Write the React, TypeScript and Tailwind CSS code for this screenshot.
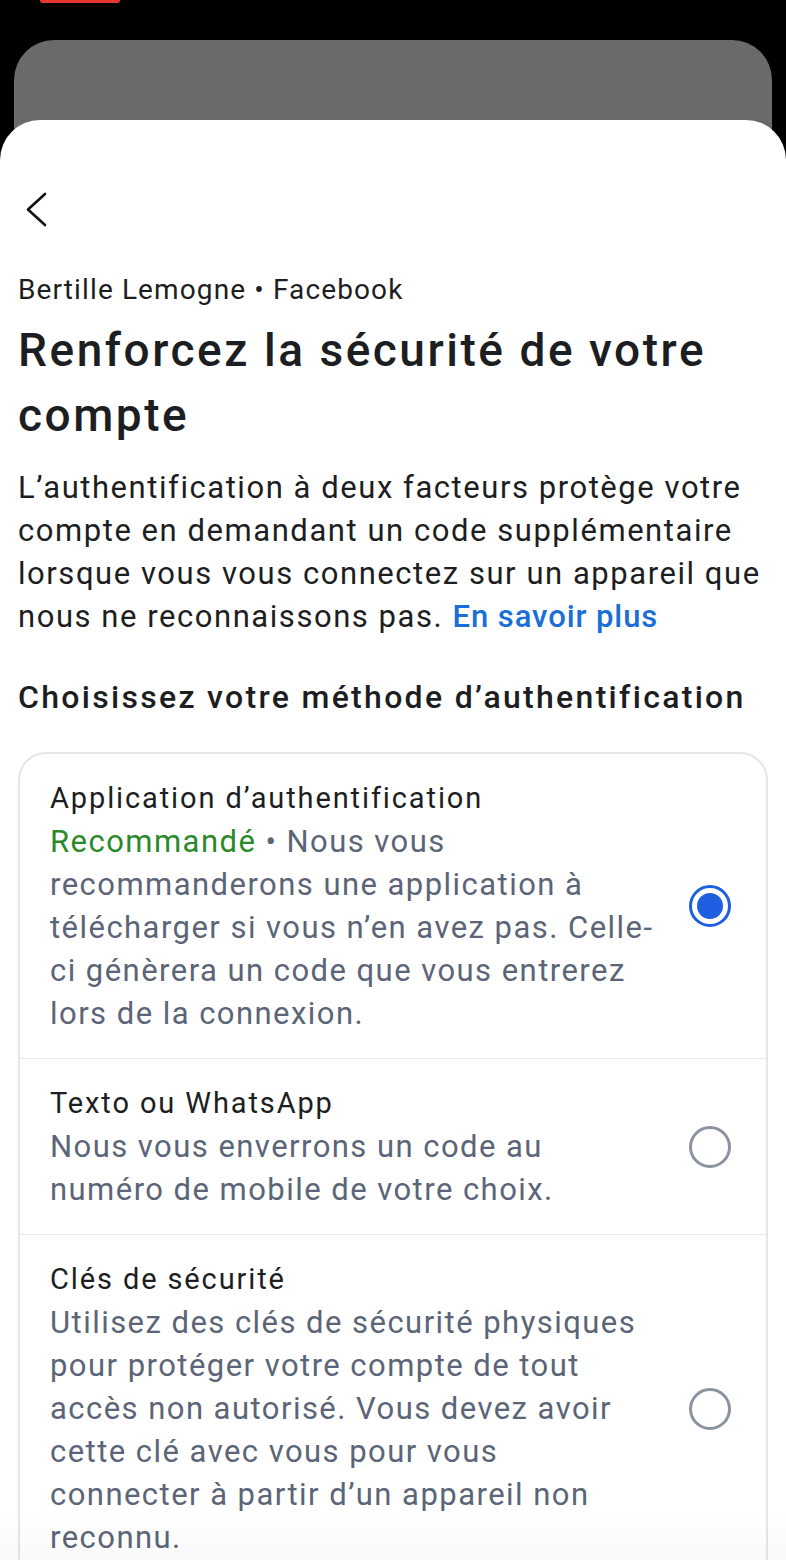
import React from "react";

const FONT = { fontFamily: "Roboto, 'Noto Sans', sans-serif" };

function Radio({ checked }: { checked?: boolean }) {
  if (checked) {
    return (
      <div className="w-[42px] h-[42px] rounded-full border-[3.5px] border-[#1d5fe0] flex items-center justify-center shrink-0">
        <div className="w-[26px] h-[26px] rounded-full bg-[#1d5fe0]" />
      </div>
    );
  }
  return <div className="w-[42px] h-[42px] rounded-full border-[3px] border-[#8a939f] shrink-0" />;
}

function Option({
  title,
  children,
  checked,
  last,
}: {
  title: string;
  children: React.ReactNode;
  checked?: boolean;
  last?: boolean;
}) {
  return (
    <div className={`flex items-center pl-[30px] pr-[35px] py-[23px] ${last ? "" : "border-b border-[#e8e9ee]"}`}>
      <div className="flex-1">
        <div className="text-[29px] leading-[43px] tracking-[0.065em] text-[#1c1e21]">{title}</div>
        <div className="text-[31px] leading-[43px] tracking-[0.047em] text-[#5b6577]">{children}</div>
      </div>
      <Radio checked={checked} />
    </div>
  );
}

export default function App() {
  return (
    <div className="w-[786px] h-[1560px] bg-black overflow-hidden flex flex-col relative" style={FONT}>
      <div className="ml-[40px] w-[80px] h-[3px] bg-[#e5362d] rounded-b-[6px] shrink-0" />
      <div className="mt-[37px] mx-[14px] h-[120px] -mb-[40px] bg-[#6b696c] rounded-t-[40px] shrink-0" />
      <div className="flex-1 bg-white rounded-t-[40px] px-[18px] relative">
        <div className="mt-[72px] ml-[6px] h-[34px]">
          <svg width="24" height="36" viewBox="0 0 24 36" fill="none">
            <path d="M21 2 L4 17.5 L21 33" stroke="#111" strokeWidth="2.6" strokeLinecap="round" strokeLinejoin="round" />
          </svg>
        </div>
        <div className="mt-[46px] text-[28px] leading-[36px] tracking-[0.04em] text-[#1c1e21]">
          Bertille Lemogne • Facebook
        </div>
        <h1 className="mt-[10px] text-[46px] leading-[65px] tracking-[0.055em] font-medium text-[#1c1e21]">
          Renforcez la sécurité de votre
          <br />
          compte
        </h1>
        <p className="mt-[18px] text-[31px] leading-[43px] tracking-[0.05em] text-[#1c1e21]">
          L’authentification à deux facteurs protège votre
          <br />
          compte en demandant un code supplémentaire
          <br />
          lorsque vous vous connectez sur un appareil que
          <br />
          nous ne reconnaissons pas. <span className="text-[#1a6ed8] font-medium tracking-[0.03em]">En savoir plus</span>
        </p>
        <h2 className="mt-[38px] text-[32px] leading-[43px] tracking-[0.072em] font-medium text-[#1c1e21]">
          Choisissez votre méthode d’authentification
        </h2>
        <div className="mt-[33px] border-2 border-[#e4e6eb] rounded-[28px]">
          <Option title="Application d’authentification" checked>
            <span className="text-[#2a8a2a]">Recommandé</span> • Nous vous
            <br />
            recommanderons une application à
            <br />
            télécharger si vous n’en avez pas. Celle-
            <br />
            ci génèrera un code que vous entrerez
            <br />
            lors de la connexion.
          </Option>
          <Option title="Texto ou WhatsApp">
            Nous vous enverrons un code au
            <br />
            numéro de mobile de votre choix.
          </Option>
          <Option title="Clés de sécurité" last>
            Utilisez des clés de sécurité physiques
            <br />
            pour protéger votre compte de tout
            <br />
            accès non autorisé. Vous devez avoir
            <br />
            cette clé avec vous pour vous
            <br />
            connecter à partir d’un appareil non
            <br />
            reconnu.
          </Option>
        </div>
        <div className="absolute left-0 right-0 bottom-0 h-[70px] bg-gradient-to-t from-[#0000000a] to-transparent pointer-events-none" />
      </div>
    </div>
  );
}
